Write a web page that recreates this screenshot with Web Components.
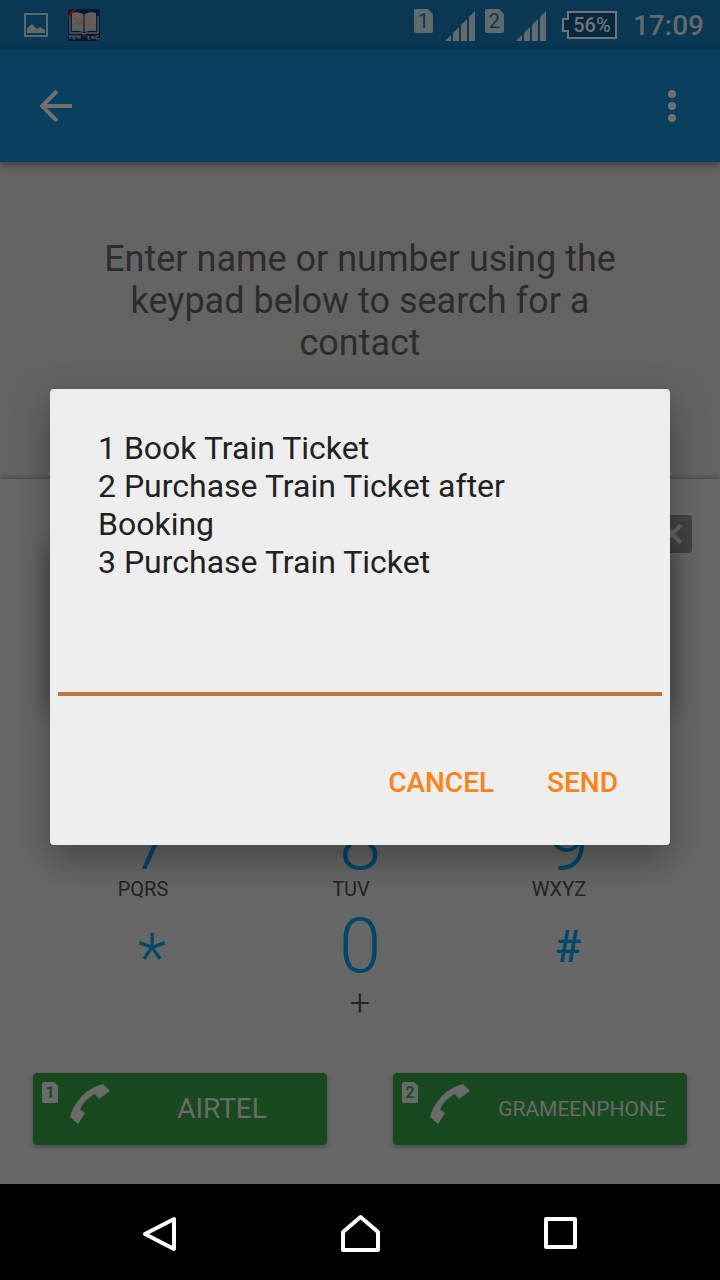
<!DOCTYPE html>
<html lang="en">
<head>
<meta charset="utf-8">
<meta name="viewport" content="width=device-width, initial-scale=1">
<title>Dialer</title>
<style>
  body { margin: 0; background: #000; font-family: Roboto, "Liberation Sans", sans-serif; }
</style>
</head>
<body>
<dialer-screen></dialer-screen>
<script>
const define = (name, html) => {
  const template = document.createElement('template');
  template.innerHTML = html;
  customElements.define(name, class extends HTMLElement {
    constructor() {
      super();
      this.attachShadow({ mode: 'open' }).append(template.content.cloneNode(true));
    }
  });
};

/* SIM card badge with a slotted slot number */
define('sim-badge', `
<style>
  :host { display: grid; place-items: center; box-sizing: border-box; width: 19px; height: 24px;
    background: var(--sim-fill, #626a6e); color: var(--sim-ink, #093754); border-radius: 2px;
    clip-path: polygon(0 0, 14px 0, 100% 5px, 100% 100%, 0 100%);
    font-size: 20px; line-height: 24px; font-weight: 400; }
  :host([small]) { width: 16px; height: 21px; font-size: 16px; line-height: 20px; font-weight: 700;
    clip-path: polygon(0 0, 12px 0, 100% 4px, 100% 100%, 0 100%); }
</style><slot></slot>`);

define('signal-bars', `
<style>:host { display: block; } svg { display: block; }</style>
<svg width="30" height="30" viewBox="0 0 30 30" fill="#626a6e" aria-hidden="true">
  <path d="M0 30L6 24V30ZM8 30V22L14 16V30ZM16 30V14L22 8V30ZM24 30V6L30 0V30Z"/>
</svg>`);

define('battery-meter', `
<style>
  :host { display: block; position: relative; width: 55px; height: 28px; }
  svg { display: block; }
  span { position: absolute; inset: 0 0 0 5px; text-align: center; font-size: 20px; line-height: 28px;
    font-weight: 500; color: #727577; }
</style>
<svg width="55" height="28" viewBox="0 0 55 28" aria-hidden="true">
  <path d="M6 1H54V27H6V20H1V8H6Z" fill="#06283d" stroke="#727577" stroke-width="2"/>
</svg><span><slot></slot></span>`);

define('status-bar', `
<style>
  :host { display: flex; justify-content: space-between; box-sizing: border-box; height: 50px;
    padding: 9px 16px 0 24px; background: #093754; }
  div { display: flex; align-items: flex-start; }
  .notes { gap: 20px; align-items: center; height: 32px; }
  .system { gap: 12px; }
  signal-bars, battery-meter { margin-top: 2px; }
  sim-badge + signal-bars { margin-right: -2px; }
  battery-meter { margin-left: 6px; }
  time { font-size: 28px; line-height: 34px; font-weight: 500; color: #66696b; margin-left: 4px; }
  svg { display: block; }
</style>
<div class="notes">
  <svg width="24" height="24" viewBox="0 0 24 24" aria-hidden="true">
    <rect x="1" y="1" width="22" height="22" fill="none" stroke="#5a686f" stroke-width="2"/>
    <path d="M3 20V15L8 11L13 16L16 14L21 17V20Z" fill="#62696d"/>
  </svg>
  <svg width="32" height="32" viewBox="0 0 32 32" aria-hidden="true">
    <rect width="32" height="32" rx="2" fill="#0a1730"/>
    <path d="M2 7V24H14L16 25L18 24H30V7" fill="none" stroke="#777c83" stroke-width="1"/>
    <path d="M4 4Q10 2 15 5V23Q10 21 4 22ZM17 5Q22 2 28 4V22Q22 21 17 23Z" fill="#5e6060"/>
    <path d="M15 5H17V23H15Z" fill="#34383b"/>
    <path d="M6 9H14M13 9V16M7 11Q10 10 9 13T7 14M9 13Q12 16 13 12" fill="none" stroke="#7a4418" stroke-width="1"/>
    <text x="19" y="16" font-family="Liberation Serif, serif" font-size="11" fill="#854f38">E</text>
    <path d="M-1 10V7L7 -1H10Z" fill="#760d19"/>
    <path d="M1 27H13M2 27V30M5 27V30H7V27M10 27V30M12 27V30M20 27V30H22M20 28H22M24 30V27L26 30V27M31 27H28V30H31V29" fill="none" stroke="#5c6066" stroke-width="1"/>
    <path d="M14 27H19" stroke="#8e2527" stroke-width="1"/>
  </svg>
</div>
<div class="system">
  <sim-badge>1</sim-badge><signal-bars></signal-bars>
  <sim-badge>2</sim-badge><signal-bars></signal-bars>
  <battery-meter>56%</battery-meter>
  <time>17:09</time>
</div>`);

define('app-bar', `
<style>
  :host { display: flex; justify-content: space-between; align-items: center; height: 112px;
    padding: 0 24px; background: #083f5f; position: relative; box-shadow: 0 3px 8px rgba(0,0,0,.4); }
  button { border: 0; padding: 0; background: none; width: 64px; height: 64px; display: grid; place-items: center; }
  button:last-child { width: 48px; }
</style>
<button aria-label="Back"><svg width="32" height="32" viewBox="0 0 32 32" fill="none" stroke="#707070" stroke-width="4">
  <path d="M32 16H3M17 1L2 16L17 31"/></svg></button>
<button aria-label="More options"><svg width="8" height="32" viewBox="0 0 8 32" fill="#707070">
  <circle cx="4" cy="4" r="4"/><circle cx="4" cy="16" r="4"/><circle cx="4" cy="28" r="4"/></svg></button>`);

define('search-hint', `
<style>
  :host { display: block; padding: 76px 96px 115px; background: #646464; }
  p { margin: 0; font-size: 36px; line-height: 42px; text-align: center; color: #2c2c2c; }
</style><p><slot></slot></p>`);

define('dial-key', `
<style>
  :host { display: block; }
  button { display: block; width: 100%; border: 0; padding: 0; background: none; font: inherit; text-align: center; }
  .digit { display: block; height: 70px; line-height: 72px; font-size: 76px; font-weight: 300; color: #00476b; }
  .sub { display: block; height: 24px; line-height: 24px; font-size: 20px; color: #242424; padding-right: 18px; }
  :host([kind="star"]) .digit { font-size: 66px; line-height: 98px; }
  :host([kind="hash"]) .digit { font-size: 44px; font-weight: 500; line-height: 74px; }
  :host([kind="zero"]) .sub { height: 44px; line-height: 46px; font-size: 36px; font-weight: 300; padding-right: 0; }
</style>
<button><span class="digit"><slot></slot></span><span class="sub"><slot name="sub"></slot></span></button>`);

define('call-button', `
<style>
  :host { display: block; }
  button { display: flex; width: 100%; height: 72px; box-sizing: border-box; padding: 9px 0 0 9px; border: 0;
    border-radius: 4px; background: #19491f; box-shadow: 0 2px 4px rgba(0,0,0,.3);
    font: inherit; font-size: 28px; color: #6a6a6a; align-items: flex-start; }
  :host([compact]) button { font-size: 21px; }
  sim-badge { --sim-fill: #6a6a6a; --sim-ink: #19491f; }
  svg { margin: 2px 7px 0 12px; flex: none; }
  .label { flex: 1; line-height: 54px; text-align: center; }
</style>
<button><sim-badge small><slot name="sim"></slot></sim-badge>
<svg width="40" height="40" viewBox="0 0 40 40" fill="#6a6a6a" aria-hidden="true">
  <path d="M0 33Q2 25 7 18Q17 4 33 0L40 7L29 15L25 10Q14 16 10 25L15 29L8 40Z"/></svg>
<span class="label"><slot></slot></span></button>`);

define('dial-pad', `
<style>
  :host { display: flex; flex-direction: column; flex: 1; background: #676767; position: relative;
    box-shadow: 0 -2px 4px rgba(0,0,0,.25); }
  .entry { display: flex; justify-content: flex-end; padding: 36px 28px 0; }
  .entry button { width: 60px; height: 38px; border: 0; padding: 0 0 0 20px; border-radius: 4px; background: #434343; }
  svg { display: block; }
  .keys { display: grid; grid-template-columns: repeat(3, 1fr); gap: 9px 0; padding: 0 48px; margin-top: auto; }
  .calls { display: grid; grid-template-columns: 1fr 1fr; gap: 66px; padding: 49px 33px 39px; }
</style>
<div class="entry"><button aria-label="Delete digit"><svg width="40" height="38" viewBox="0 0 40 38" fill="none" stroke="#676767" stroke-width="4">
  <path d="M11 10L29 28M29 10L11 28"/></svg></button></div>
<div class="keys">
  <dial-key>7<span slot="sub">PQRS</span></dial-key>
  <dial-key>8<span slot="sub">TUV</span></dial-key>
  <dial-key>9<span slot="sub">WXYZ</span></dial-key>
  <dial-key kind="star">*</dial-key>
  <dial-key kind="zero">0<span slot="sub">+</span></dial-key>
  <dial-key kind="hash">#</dial-key>
</div>
<div class="calls">
  <call-button><span slot="sim">1</span>AIRTEL</call-button>
  <call-button compact><span slot="sim">2</span>GRAMEENPHONE</call-button>
</div>`);

define('nav-bar', `
<style>
  :host { display: grid; grid-template-columns: repeat(3, 200px); justify-content: center; height: 96px; background: #000; }
  button { border: 0; padding: 4px 0 0; background: none; display: grid; place-items: center; }
  svg { fill: none; stroke: #fff; stroke-width: 4; stroke-linejoin: round; }
</style>
<button aria-label="Back"><svg width="40" height="40" viewBox="0 0 40 40"><path d="M34 5V35L5 20Z"/></svg></button>
<button aria-label="Home"><svg width="40" height="40" viewBox="0 0 40 40"><path d="M20.500 3L38 18V36H3V18Z"/></svg></button>
<button aria-label="Recent apps"><svg width="40" height="40" viewBox="0 0 40 40"><rect x="6" y="5" width="29" height="28"/></svg></button>`);

define('ussd-dialog', `
<style>
  :host { display: flex; align-items: center; position: absolute; inset: 50px 0 96px; padding: 0 50px; }
  form { position: relative; flex: 1; padding: 40px 0 27px; background: #eee; border-radius: 4px;
    box-shadow: 0 14px 36px rgba(0,0,0,.34); }
  form::before { content: ""; position: absolute; inset: 160px 0 136px; box-shadow: 0 0 24px rgba(0,0,0,.36); z-index: -1; }
  .message { padding: 0 48px; font-size: 32px; line-height: 38px; color: #212121; }
  input { display: block; box-sizing: border-box; width: calc(100% - 16px); height: 75px; margin: 40px 8px 50px;
    padding: 0 8px; border: 0; border-bottom: 4px solid #ba7840; background: none; outline: 0; border-radius: 0;
    font: inherit; font-size: 32px; color: #212121; }
  .actions { display: flex; justify-content: flex-end; gap: 21px; padding: 0 36px; }
  .actions button { height: 72px; padding: 0 16px; border: 0; background: none; font: inherit; font-size: 28px;
    font-weight: 500; color: #ff8216; }
</style>
<form role="dialog" aria-label="Service message">
  <div class="message"><slot></slot></div>
  <input type="text" aria-label="Reply">
  <div class="actions"><button type="button">CANCEL</button><button type="button">SEND</button></div>
</form>`);

define('dialer-screen', `
<style>
  :host { display: flex; flex-direction: column; position: relative; z-index: 0; min-height: 100vh; }
  ussd-dialog { z-index: 1; }
</style>
<status-bar></status-bar>
<app-bar></app-bar>
<search-hint>Enter name or number using the keypad below to search for a contact</search-hint>
<dial-pad></dial-pad>
<nav-bar></nav-bar>
<ussd-dialog>
  <div>1 Book Train Ticket</div>
  <div>2 Purchase Train Ticket after Booking</div>
  <div>3 Purchase Train Ticket</div>
</ussd-dialog>`);
</script>
</body>
</html>
